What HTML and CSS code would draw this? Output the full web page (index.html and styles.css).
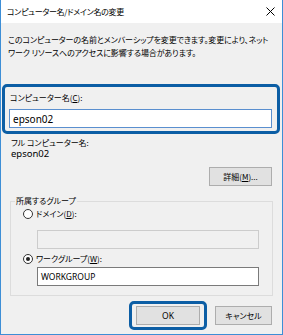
FILE: index.html
```html
<!DOCTYPE html>
<html lang="ja">
<head>
    <meta charset="UTF-8">
    <title>コンピューター名/ドメイン名の変更</title>
    <link rel="stylesheet" href="styles.css">
</head>
<body>

    <div class="window">
        <div class="titlebar">
            <span class="title">コンピューター名/ドメイン名の変更</span>
            <svg class="close" width="9" height="9" viewBox="0 0 9 9">
                <path d="M0.5 0.5 L8.5 8.5 M8.5 0.5 L0.5 8.5" stroke="#000" stroke-width="1" fill="none"/>
            </svg>
        </div>

        <div class="content">
            <p class="desc">このコンピューターの名前とメンバーシップを変更できます。変更により、ネット<br>ワーク リソースへのアクセスに影響する場合があります。</p>

            <!-- 強調されたコンピューター名の欄 -->
            <div class="name-box">
                <div class="label">コンピューター名(<u>C</u>):</div>
                <div class="input focus">epson02</div>
            </div>

            <div class="full-label">フル コンピューター名:</div>
            <div class="full-value">epson02</div>

            <div class="detail-row">
                <div class="button detail">詳細(<u>M</u>)...</div>
            </div>

            <fieldset class="group">
                <legend>所属するグループ</legend>
                <div class="radio-row first">
                    <span class="radio"></span>
                    <span>ドメイン(<u>D</u>):</span>
                </div>
                <div class="input disabled"></div>
                <div class="radio-row second">
                    <span class="radio checked"></span>
                    <span>ワークグループ(<u>W</u>):</span>
                </div>
                <div class="input workgroup">WORKGROUP</div>
            </fieldset>

            <div class="button-row">
                <div class="ok-ring">
                    <div class="button ok">OK</div>
                </div>
                <div class="button cancel">キャンセル</div>
            </div>
        </div>
    </div>

</body>
</html>
```

FILE: styles.css
```css
body {
    margin: 0;
    font-family: "Noto Sans CJK JP", "Noto Sans", sans-serif;
    font-size: 8px;
    font-feature-settings: "palt";
    color: #000;
}

.window {
    width: 283px;
    height: 335px;
    box-sizing: border-box;
    background-color: #f0f0f0;
    border-left: 1px solid #3d8ed6;
    border-right: 1px solid #3d8ed6;
    border-bottom: 1px solid #3d8ed6;
}

.titlebar {
    height: 23px;
    background-color: #fff;
    display: flex;
    align-items: center;
    justify-content: space-between;
    padding: 0 7px 0 6px;
}

.title {
    font-size: 8px;
    line-height: 12px;
    letter-spacing: -0.3px;
}

.close {
    display: block;
}

.content {
    display: flex;
    flex-direction: column;
    align-items: flex-start;
}

u {
    text-decoration-thickness: 1px;
    text-underline-offset: 1px;
}

.desc {
    margin: 10px 0 0 7px;
    line-height: 13px;
    white-space: nowrap;
    letter-spacing: -0.1px;
}

.name-box {
    margin: 25px 0 0 1px;
    width: 278px;
    height: 50px;
    box-sizing: border-box;
    border: 3px solid #0c5ea5;
    border-radius: 5px;
    padding: 4px 5px 0 4px;
}

.name-box .label {
    line-height: 13px;
    padding-left: 1px;
}

.input {
    box-sizing: border-box;
    height: 19px;
    background-color: #fff;
    border: 1px solid #7a7a7a;
    font-family: "Noto Sans", sans-serif;
    display: flex;
    align-items: center;
}

.input.focus {
    margin-top: 5px;
    width: 263px;
    border-color: #5a8fcf;
    padding-left: 3px;
    font-size: 10px;
}

.full-label {
    margin: 3px 0 0 10px;
    line-height: 11px;
}

.full-value {
    margin-left: 10px;
    line-height: 11px;
    font-family: "Noto Sans", sans-serif;
    font-size: 9.5px;
}

.detail-row {
    margin: 8px 0 0 208px;
}

.button {
    box-sizing: border-box;
    height: 19px;
    background-color: #e1e1e1;
    border: 1px solid #adadad;
    display: flex;
    align-items: center;
    justify-content: center;
}

.detail {
    width: 63px;
}

.group {
    margin: 9px 0 0 9px;
    width: 263px;
    box-sizing: border-box;
    border: 1px solid #dcdcdc;
    padding: 0 0 9px 0;
}

.group legend {
    margin-left: 4px;
    padding: 0 1px;
    line-height: 12px;
}

.radio-row {
    display: flex;
    align-items: center;
    gap: 3px;
    line-height: 12px;
    margin-left: 12px;
}

.radio-row.first {
    margin-top: 1px;
}

.radio-row.second {
    margin-top: 4px;
}

.radio {
    width: 10px;
    height: 10px;
    box-sizing: border-box;
    border: 1px solid #333;
    border-radius: 50%;
    background-color: #fff;
    display: flex;
    align-items: center;
    justify-content: center;
}

.radio.checked::after {
    content: "";
    width: 4px;
    height: 4px;
    border-radius: 50%;
    background-color: #222;
}

.input.disabled {
    margin: 10px 0 0 26px;
    width: 222px;
    background-color: #f0f0f0;
    border-color: #cccccc;
}

.input.workgroup {
    margin: 2px 0 0 26px;
    width: 222px;
    padding-left: 3px;
    font-size: 8.5px;
}

.button-row {
    margin: 5px 0 0 128px;
    display: flex;
    align-items: center;
    gap: 8px;
}

.ok-ring {
    border: 3px solid #0c5ea5;
    border-radius: 5px;
    padding: 2px 4px;
}

.ok {
    width: 64px;
    font-family: "Noto Sans", sans-serif;
    font-size: 8.5px;
}

.cancel {
    width: 57px;
}
```
